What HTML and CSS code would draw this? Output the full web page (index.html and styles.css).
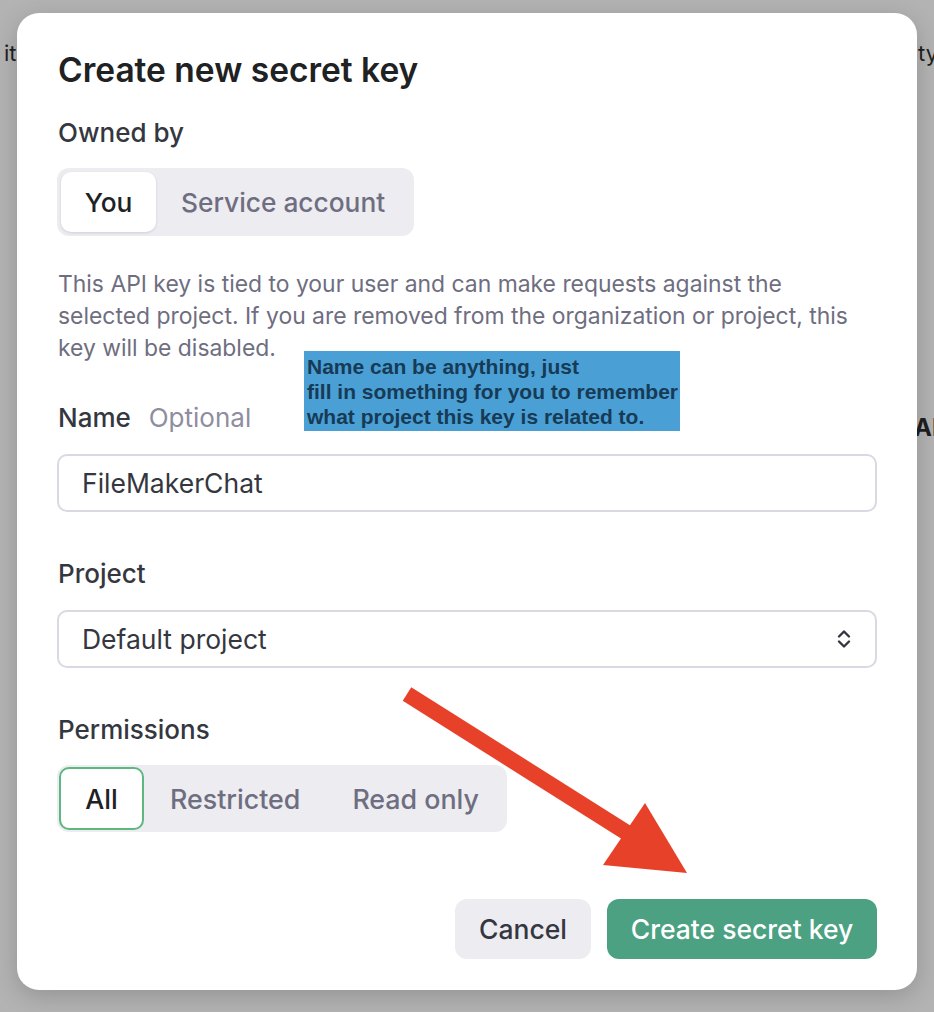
FILE: index.html
```html
<!DOCTYPE html>
<html lang="en">
<head>
<meta charset="UTF-8">
<title>Create new secret key</title>
<link rel="stylesheet" href="styles.css">
</head>
<body>
<!-- page behind the dialog -->
<div class="page">
	<span class="bg-text bg-left">it</span>
	<span class="bg-text bg-right">ty</span>
	<span class="bg-text bg-ai">AI</span>
</div>

<div class="modal">
	<h1 class="title">Create new secret key</h1>

	<div class="label">Owned by</div>
	<div class="toggle">
		<button class="toggle-btn active">You</button>
		<button class="toggle-btn">Service account</button>
	</div>

	<p class="desc">This API key is tied to your user and can make requests against the<br>selected project. If you are removed from the organization or project, this<br>key will be disabled.</p>

	<div class="label label-name">Name <span class="optional">Optional</span></div>
	<div class="input">FileMakerChat</div>

	<div class="label label-gap">Project</div>
	<div class="input select">
		<span>Default project</span>
		<svg class="chevrons" width="16" height="24" viewBox="0 0 16 24">
			<path d="M3 9.5 L8 4.5 L13 9.5" fill="none" stroke="#353740" stroke-width="2.4" stroke-linecap="round" stroke-linejoin="round"/>
			<path d="M3 14.5 L8 19.5 L13 14.5" fill="none" stroke="#353740" stroke-width="2.4" stroke-linecap="round" stroke-linejoin="round"/>
		</svg>
	</div>

	<div class="label label-gap">Permissions</div>
	<div class="segmented">
		<button class="seg-btn selected">All</button>
		<button class="seg-btn">Restricted</button>
		<button class="seg-btn">Read only</button>
	</div>

	<div class="actions">
		<button class="btn btn-cancel">Cancel</button>
		<button class="btn btn-primary">Create secret key</button>
	</div>
</div>

<!-- annotation drawn on top of the screenshot -->
<div class="note">Name can be anything, just<br>fill in something for you to remember<br>what project this key is related to.</div>
<svg class="arrow" width="934" height="1012" viewBox="0 0 934 1012">
	<line x1="407" y1="694" x2="632" y2="836" stroke="#e8412a" stroke-width="16"/>
	<polygon points="603,865 645,803 687,873" fill="#e8412a"/>
</svg>
</body>
</html>
```
FILE: styles.css
```css
/* reset */
*{
	margin: 0;
	padding: 0;
	box-sizing: border-box;
}
body{
	background-color: #b3b3b3;
	font-family: Inter, "Noto Sans", sans-serif;
	color: #202123;
	width: 934px;
	height: 1012px;
	overflow: hidden;
	position: relative;
	padding: 13px 17px 0;
}
button{
	font-family: inherit;
	border: none;
	background: none;
	cursor: pointer;
}

/* page behind */
.bg-text{
	position: absolute;
	font-size: 22px;
	color: #1f1f1f;
}
.bg-left{ left: 4px; top: 40px; }
.bg-right{ left: 918px; top: 40px; }
.bg-ai{ left: 914px; top: 413px; font-weight: 700; font-size: 24px; }

/* dialog */
.modal{
	position: relative;
	width: 900px;
	height: 977px;
	background: #fff;
	border-radius: 22px;
	padding: 37px 40px 0 41px;
	display: flex;
	flex-direction: column;
	align-items: flex-start;
	box-shadow: 0 6px 24px rgba(0,0,0,0.18);
}
.title{
	font-size: 33.5px;
	line-height: 40px;
	font-weight: 600;
	color: #202123;
}
.label{
	font-size: 26px;
	line-height: 30px;
	font-weight: 500;
	color: #353740;
	margin-top: 28px;
}
.label-name{ margin-top: 39px; }
.label-gap{ margin-top: 47px; }
.optional{
	font-weight: 400;
	color: #8e8ea0;
	margin-left: 11px;
}

/* owned-by toggle */
.toggle{
	margin-top: 20px;
	margin-left: -1px;
	height: 68px;
	background: #ececf1;
	border-radius: 12px;
	padding: 4px;
	display: flex;
}
.toggle-btn{
	height: 60px;
	font-size: 26.3px;
	font-weight: 500;
	color: #6e6e80;
	padding: 0 25px;
	border-radius: 10px;
}
.toggle-btn.active{
	width: 95px;
	padding: 0;
	background: #fff;
	color: #202123;
	box-shadow: 0 1px 3px rgba(0,0,0,0.12);
}

.desc{
	margin-top: 32px;
	font-size: 22.9px;
	line-height: 32px;
	color: #6e6e80;
}

/* inputs */
.input{
	margin-top: 21px;
	margin-left: -1px;
	width: 820px;
	height: 58px;
	border: 2px solid #d9d9e3;
	border-radius: 10px;
	padding: 0 23px;
	display: flex;
	align-items: center;
	font-size: 26.5px;
	color: #353740;
}
.select{
	justify-content: space-between;
}

/* permissions */
.segmented{
	margin-top: 20px;
	margin-left: -1px;
	height: 67px;
	background: #ececf1;
	border-radius: 12px;
	padding: 2px;
	display: flex;
}
.seg-btn{
	height: 63px;
	font-size: 26.8px;
	font-weight: 500;
	color: #6e6e80;
	padding: 0 26px;
	border-radius: 10px;
}
.seg-btn.selected{
	width: 85px;
	padding: 0;
	background: #fff;
	color: #202123;
	border: 2px solid #5cb87f;
}

/* footer buttons */
.actions{
	margin-top: 67px;
	align-self: flex-end;
	display: flex;
	gap: 16px;
}
.btn{
	height: 60px;
	border-radius: 12px;
	font-size: 26.5px;
	font-weight: 500;
}
.btn-cancel{
	width: 136px;
	background: #ececf1;
	color: #353740;
}
.btn-primary{
	width: 270px;
	background: #4ba182;
	color: #fff;
}

/* annotation overlay */
.note{
	position: absolute;
	left: 304px;
	top: 351px;
	width: 376px;
	height: 80px;
	background: #4aa0d5;
	padding: 3px 0 0 3px;
	font-family: "Liberation Sans", Arial, sans-serif;
	font-weight: 700;
	font-size: 21px;
	line-height: 25px;
	color: #173a55;
	white-space: nowrap;
}
.arrow{
	position: absolute;
	left: 0;
	top: 0;
	pointer-events: none;
}
```
